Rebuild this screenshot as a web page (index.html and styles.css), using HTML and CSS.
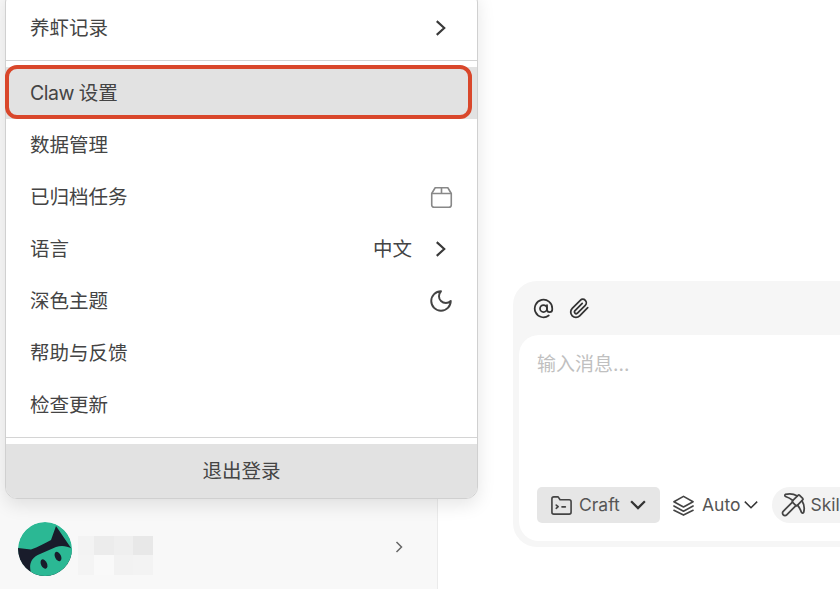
FILE: index.html
```html
<!DOCTYPE html>
<html lang="zh-CN">
<head>
    <meta charset="UTF-8">
    <meta name="viewport" content="width=device-width, initial-scale=1.0">
    <title>Claw 设置</title>
    <link rel="stylesheet" href="styles.css">
</head>
<body>
    <div class="app">
        <aside class="sidebar">
            <div class="user-row">
                <svg class="avatar" viewBox="0 0 54 54">
                    <circle cx="27" cy="27" r="27" fill="#2bb894"/>
                    <path d="M0 26 L13 27.500 C20 25 27 21 33 18 L38 4 L53 26 L56 54 L0 54 Z" fill="#191c2b"/>
                    <path d="M14 54 C12 48 11 43 14 38 C16 35 19 33 22 32 L38 25 C44 23 50 24 56 28 L56 54 Z" fill="#2bb894"/>
                    <ellipse cx="26" cy="42" rx="3" ry="5" transform="rotate(-25 26 42)" fill="#191c2b"/>
                    <ellipse cx="40" cy="34.500" rx="3" ry="5" transform="rotate(-25 40 34.500)" fill="#191c2b"/>
                </svg>
                <div class="mosaic">
                    <span class="m1"></span><span class="m2"></span><span class="m3"></span><span class="m4"></span>
                    <span class="m5"></span><span class="m6"></span><span class="m7"></span><span class="m8"></span>
                </div>
                <svg class="user-arrow" viewBox="0 0 10 14"><path d="M2.500 2 L7.500 7 L2.500 12"/></svg>
            </div>
        </aside>

        <main class="main">
            <div class="composer">
                <div class="composer-tools">
                    <svg class="tool-icon" viewBox="0 0 24 24"><circle cx="12" cy="12" r="4"/><path d="M16 8v5a3 3 0 0 0 6 0v-1a10 10 0 1 0-4 8"/></svg>
                    <svg class="tool-icon" viewBox="0 0 24 24"><path d="M21.400 11.100l-9.200 9.200a6 6 0 0 1-8.500-8.500l9.200-9.200a4 4 0 0 1 5.700 5.700l-9.200 9.200a2 2 0 0 1-2.800-2.800l8.500-8.500"/></svg>
                </div>
                <div class="composer-box">
                    <div class="placeholder">输入消息...</div>
                    <div class="composer-actions">
                        <button class="chip chip-craft">
                            <svg class="chip-icon" viewBox="0 0 24 24"><path d="M4 3h4.500l2 3H20a2 2 0 0 1 2 2v11a2 2 0 0 1-2 2H4a2 2 0 0 1-2-2V5a2 2 0 0 1 2-2z"/><path d="M6.500 11.500l2 1.700-2 1.700M12.500 13.500h3.500"/></svg>
                            <span>Craft</span>
                            <svg class="chip-arrow" viewBox="0 0 16 16"><path d="M2.500 5 L8 10.500 L13.500 5"/></svg>
                        </button>
                        <button class="chip chip-auto">
                            <svg class="chip-icon" viewBox="0 0 24 24"><path d="M12 2.500L22 8l-10 5.500L2 8z"/><path d="M2 12.500l10 5.500 10-5.500M2 17l10 5 10-5"/></svg>
                            <span>Auto</span>
                            <svg class="chip-arrow thin" viewBox="0 0 16 16"><path d="M2.500 5 L8 10.500 L13.500 5"/></svg>
                        </button>
                        <button class="chip chip-skill">
                            <svg class="chip-icon pick" viewBox="0 0 24 24"><path d="M14.531 12.469 6.619 20.380a1 1 0 1 1-3-3l7.912-7.912"/><path d="M15.686 4.314A12.500 12.500 0 0 0 5.461 2.958 1 1 0 0 0 5.580 4.710a22 22 0 0 1 6.318 3.393"/><path d="M17.700 3.700a1 1 0 0 0-1.400 0l-4.600 4.600a1 1 0 0 0 0 1.400l2.600 2.600a1 1 0 0 0 1.400 0l4.600-4.600a1 1 0 0 0 0-1.400z"/><path d="M19.686 8.314a12.501 12.501 0 0 1 1.356 10.225 1 1 0 0 1-1.751-.119 22 22 0 0 0-3.393-6.319"/></svg>
                            <span>Skills</span>
                        </button>
                    </div>
                </div>
            </div>
        </main>

        <div class="menu">
            <div class="menu-item">
                <span>养虾记录</span>
                <svg class="arrow" viewBox="0 0 12 16"><path d="M3 2.500 L9 8 L3 13.500"/></svg>
            </div>
            <div class="menu-sep"></div>
            <div class="menu-item active"><span><span class="latin">Claw </span>设置</span></div>
            <div class="menu-item"><span>数据管理</span></div>
            <div class="menu-item">
                <span>已归档任务</span>
                <svg class="box-icon" viewBox="0 0 20 20"><path d="M4.500 1.500h11l3 5v10a2 2 0 0 1-2 2h-13a2 2 0 0 1-2-2v-10z"/><path d="M1.500 6.500h17M10 1.500v5"/></svg>
            </div>
            <div class="menu-item">
                <span>语言</span>
                <span class="item-value">中文</span>
                <svg class="arrow" viewBox="0 0 12 16"><path d="M3 2.500 L9 8 L3 13.500"/></svg>
            </div>
            <div class="menu-item">
                <span>深色主题</span>
                <svg class="moon-icon" viewBox="0 0 24 24"><path d="M12 3a6 6 0 0 0 9 9 9 9 0 1 1-9-9Z"/></svg>
            </div>
            <div class="menu-item"><span>帮助与反馈</span></div>
            <div class="menu-item"><span>检查更新</span></div>
            <div class="menu-sep"></div>
            <div class="menu-logout">退出登录</div>
        </div>
        <div class="highlight"></div>
    </div>
</body>
</html>
```

FILE: styles.css
```css
body, html {
    margin: 0;
    padding: 0;
    height: 100%;
    overflow: hidden;
    background-color: #fff;
    font-family: Inter, "Noto Sans CJK SC", sans-serif;
    color: #444;
}
.app {
    position: relative;
    display: flex;
    width: 840px;
    height: 589px;
    overflow: hidden;
}
.sidebar {
    width: 437px;
    flex-shrink: 0;
    display: flex;
    flex-direction: column;
    justify-content: flex-end;
    background-color: #f8f8f8;
    border-right: 1px solid #ebebeb;
}
.user-row {
    display: flex;
    align-items: center;
    height: 54px;
    padding: 0 33px 13px 18px;
}
.avatar {
    width: 54px;
    height: 54px;
    border-radius: 50%;
    flex-shrink: 0;
}
.mosaic {
    display: grid;
    grid-template-columns: 16px 20px 19px 20px;
    grid-template-rows: 19px 20px;
    margin: 13px 0 0 6px;
}
.m1 { background-color: #f3f3f3; }
.m2 { background-color: #ececec; }
.m3 { background-color: #efefef; }
.m4 { background-color: #e8e8e8; }
.m5 { background-color: #f4f4f4; }
.m6 { background-color: #f9f9f9; }
.m7 { background-color: #f2f2f2; }
.m8 { background-color: #f3f3f3; }
.user-arrow {
    width: 10px;
    height: 14px;
    margin: 0 0 4px auto;
    fill: none;
    stroke: #666;
    stroke-width: 1.500;
}

.main {
    flex-grow: 1;
    position: relative;
    padding: 281px 0 0 75px;
    overflow: hidden;
}
.composer {
    width: 400px;
    height: 266px;
    box-sizing: border-box;
    padding: 0 0 6px 6px;
    display: flex;
    flex-direction: column;
    background-color: #f6f6f6;
    border-radius: 24px;
}
.composer-tools {
    display: flex;
    align-items: center;
    gap: 15px;
    height: 54px;
    padding-left: 14px;
    box-sizing: border-box;
}
.tool-icon {
    width: 21px;
    height: 21px;
    fill: none;
    stroke: #333;
    stroke-width: 2;
    stroke-linecap: round;
    stroke-linejoin: round;
}
.composer-box {
    flex-grow: 1;
    display: flex;
    flex-direction: column;
    justify-content: space-between;
    padding: 18px 0 18px 18px;
    background-color: #fff;
    border-radius: 20px;
}
.placeholder {
    font-size: 19px;
    line-height: 24px;
    color: #c0c0c0;
}
.composer-actions {
    display: flex;
    align-items: center;
    gap: 12px;
}
.chip {
    display: flex;
    align-items: center;
    height: 36px;
    padding: 0;
    border: none;
    background: none;
    font-family: inherit;
    font-size: 17.500px;
    color: #555;
    white-space: nowrap;
}
.chip span {
    padding-bottom: 2px;
}
.chip-craft {
    width: 123px;
    padding-left: 13px;
    box-sizing: border-box;
    background-color: #e6e6e6;
    border-radius: 5px;
}
.chip-auto {
    gap: 7px;
}
.chip-skill {
    padding: 0 12px 0 7px;
    background-color: #f3f3f3;
    border-radius: 18px;
}
.chip-icon {
    width: 23px;
    height: 23px;
    fill: none;
    stroke: #444;
    stroke-width: 1.700;
    stroke-linecap: round;
    stroke-linejoin: round;
}
.chip-icon.pick {
    width: 28px;
    height: 28px;
    stroke-width: 1.500;
}
.chip-craft span {
    margin: 0 8px 0 6px;
}
.chip-skill span {
    margin-left: 3px;
}
.chip-arrow {
    width: 20px;
    height: 20px;
    fill: none;
    stroke: #333;
    stroke-width: 1.800;
}
.chip-arrow.thin {
    width: 18px;
    height: 18px;
    stroke-width: 1.300;
    margin-left: -5px;
}

.menu {
    position: absolute;
    left: 5px;
    top: -10px;
    width: 473px;
    box-sizing: border-box;
    padding-top: 11px;
    background-color: #fff;
    border: 1px solid #d0d0d0;
    border-radius: 12px;
    box-shadow: 0 6px 18px rgba(0, 0, 0, 0.10);
    overflow: hidden;
}
.menu-item {
    display: flex;
    align-items: center;
    height: 52px;
    padding: 0 25px 0 24px;
    font-size: 19.500px;
}
.menu-item > span {
    padding-bottom: 4px;
}
.latin {
    letter-spacing: -0.500px;
}
.menu-item.active {
    background-color: #e2e2e2;
}
.item-value {
    margin-left: auto;
    margin-right: 21px;
}
.arrow {
    width: 15px;
    height: 20px;
    margin-left: auto;
    margin-right: 4px;
    fill: none;
    stroke: #3a3a3a;
    stroke-width: 1.700;
}
.item-value + .arrow {
    margin-left: 0;
}
.box-icon {
    width: 23px;
    height: 23px;
    margin: 0 -1px 0 auto;
    fill: none;
    stroke: #888;
    stroke-width: 1.400;
    stroke-linejoin: round;
}
.moon-icon {
    width: 26px;
    height: 26px;
    margin: 0 -2px 0 auto;
    fill: none;
    stroke: #444;
    stroke-width: 1.800;
    stroke-linejoin: round;
}
.menu-sep {
    height: 1px;
    margin: 6px 0;
    background-color: #d4d4d4;
}
.menu-logout {
    height: 54px;
    line-height: 55px;
    text-align: center;
    font-size: 19.500px;
    background-color: #e2e2e2;
}
/* red annotation box round the highlighted row */
.highlight {
    position: absolute;
    left: 5px;
    top: 65px;
    width: 467px;
    height: 54px;
    box-sizing: border-box;
    border: 4px solid #d9472b;
    border-radius: 12px;
}
```
